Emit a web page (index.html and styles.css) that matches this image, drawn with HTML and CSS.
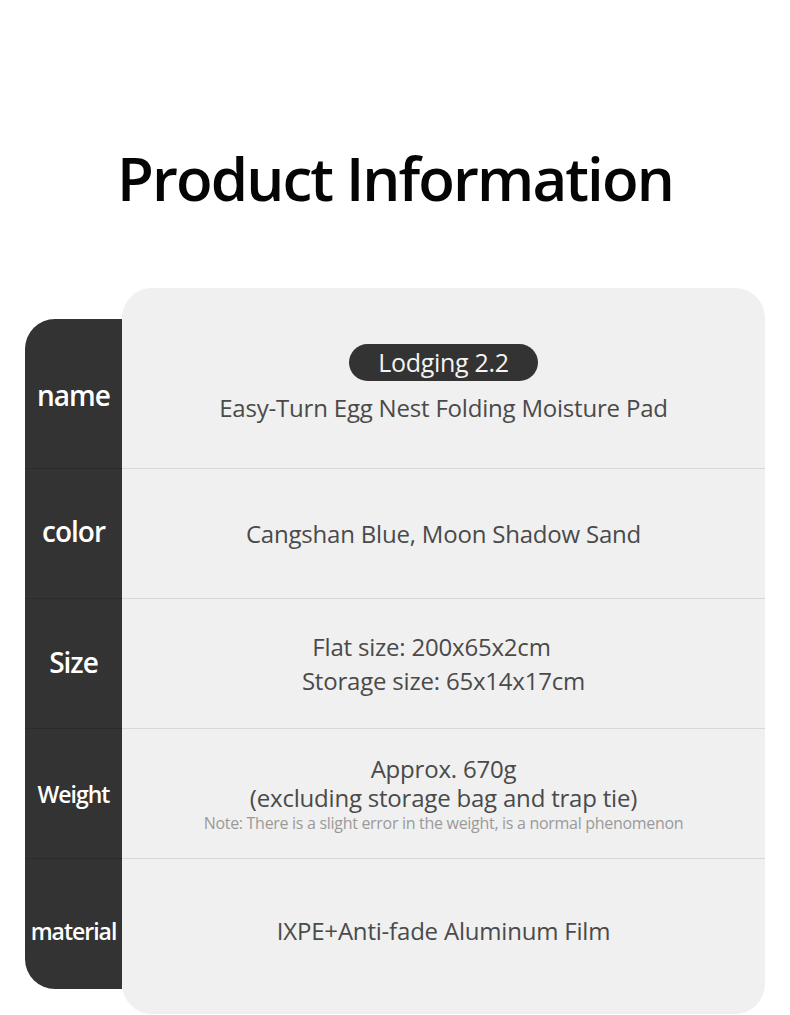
FILE: index.html
```html
<!DOCTYPE html>
<html lang="en">
<head>
<meta charset="utf-8">
<title>Product Information</title>
<link rel="stylesheet" href="styles.css">
</head>
<body>
<main class="page">
  <h1 class="title">Product Information</h1>
  <section class="table">
    <div class="labels">
      <div class="label label-first">name</div>
      <div class="label label-color">color</div>
      <div class="label label-size">Size</div>
      <div class="label label-sm">Weight</div>
      <div class="label label-sm label-last">material</div>
    </div>
    <div class="card">
      <div class="row row-first">
        <span class="pill">Lodging 2.2</span>
        <p class="text pill-sub">Easy-Turn Egg Nest Folding Moisture Pad</p>
      </div>
      <div class="row">
        <p class="text">Cangshan Blue, Moon Shadow Sand</p>
      </div>
      <div class="row">
        <p class="text lines"><span class="line line-offset">Flat size: 200x65x2cm</span><span class="line">Storage size: 65x14x17cm</span></p>
      </div>
      <div class="row row-weight">
        <p class="text tight">Approx. 670g<br>(excluding storage bag and trap tie)</p>
        <p class="note">Note: There is a slight error in the weight, is a normal phenomenon</p>
      </div>
      <div class="row row-last">
        <p class="text">IXPE+Anti-fade Aluminum Film</p>
      </div>
    </div>
  </section>
</main>
</body>
</html>
```
FILE: styles.css
```css
html, body {
  margin: 0;
  padding: 0;
  background: #ffffff;
}

.page {
  width: 790px;
  font-family: "Open Sans", "Liberation Sans", sans-serif;
}

.title {
  margin: 0;
  height: 288px;
  padding-top: 138px;
  box-sizing: border-box;
  text-align: center;
  font-size: 60px;
  font-weight: 600;
  line-height: 80px;
  color: #050505;
  letter-spacing: -1.9px;
}

.table {
  display: flex;
  padding-left: 25px;
}

.labels {
  width: 97px;
  margin-top: 31px;
  margin-bottom: 25px;
  background: #333333;
  border-radius: 30px 0 0 30px;
  display: flex;
  flex-direction: column;
}

.label {
  height: 130px;
  box-sizing: border-box;
  border-top: 1px solid #2b2b2b;
  display: flex;
  align-items: center;
  justify-content: center;
  color: #ffffff;
  font-size: 28px;
  font-weight: 600;
  letter-spacing: -1px;
}

.label-first {
  height: 149px;
  border-top: none;
  padding-top: 2px;
}

.label-color {
  padding-bottom: 6px;
}

.label-size {
  padding-bottom: 4px;
}

.label-last {
  height: 131px;
  padding-top: 14px;
}

.label-sm {
  font-size: 23px;
  letter-spacing: -1px;
}

.card {
  width: 643px;
  background: #f0f0f0;
  border-radius: 30px;
  padding-top: 31px;
  padding-bottom: 25px;
  display: flex;
  flex-direction: column;
}

.row {
  height: 130px;
  box-sizing: border-box;
  border-top: 1px solid #d8d8d8;
  display: flex;
  flex-direction: column;
  align-items: center;
  justify-content: center;
}

.row-first {
  height: 149px;
  border-top: none;
  justify-content: flex-start;
  padding-top: 25px;
}

.row-last {
  height: 131px;
  padding-top: 14px;
}

.text {
  margin: 0;
  text-align: center;
  color: #4a4a4a;
  font-size: 24px;
  line-height: 30px;
  letter-spacing: -0.2px;
}

.pill {
  display: inline-block;
  height: 37px;
  line-height: 37px;
  padding: 0 29px;
  border-radius: 19px;
  background: #333333;
  color: #f4f4f4;
  font-size: 25px;
  letter-spacing: -0.3px;
}

.pill-sub {
  margin-top: 12px;
}

.lines {
  display: flex;
  flex-direction: column;
  align-items: center;
  line-height: 34px;
}

.line {
  display: block;
}

.line-offset {
  margin-right: 24px;
}

.row-weight {
  padding-top: 0;
}

.tight {
  line-height: 29px;
}

.note {
  margin: 1px 0 0;
  color: #9a9a9a;
  font-size: 16px;
  line-height: 20px;
  letter-spacing: -0.3px;
}
```
